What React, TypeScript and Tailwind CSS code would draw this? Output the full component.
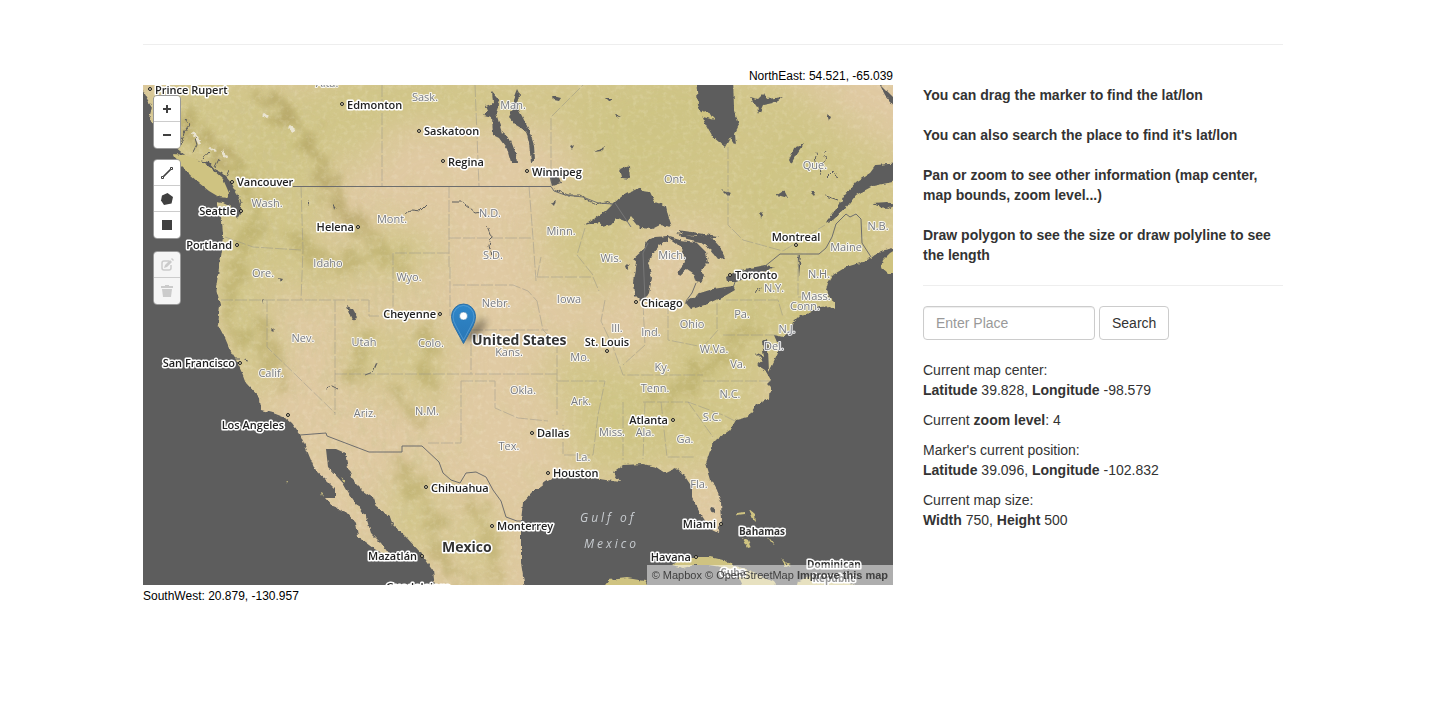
import React from "react";

type Anchor = "start" | "middle" | "end";
type City = { name: string; dot: [number, number]; x: number; y: number; anchor: Anchor };

const cities: City[] = [
  { name: "Prince Rupert", dot: [7, 4], x: 12, y: 9, anchor: "start" },
  { name: "Edmonton", dot: [199, 19], x: 204, y: 24, anchor: "start" },
  { name: "Saskatoon", dot: [276, 46], x: 281, y: 50, anchor: "start" },
  { name: "Regina", dot: [300, 76], x: 305, y: 81, anchor: "start" },
  { name: "Winnipeg", dot: [384, 86], x: 389, y: 91, anchor: "start" },
  { name: "Vancouver", dot: [89, 97], x: 94, y: 101, anchor: "start" },
  { name: "Seattle", dot: [98, 126], x: 93, y: 130, anchor: "end" },
  { name: "Portland", dot: [94, 160], x: 89, y: 164, anchor: "end" },
  { name: "Helena", dot: [215, 142], x: 211, y: 146, anchor: "end" },
  { name: "Cheyenne", dot: [297, 229], x: 293, y: 233, anchor: "end" },
  { name: "San Francisco", dot: [97, 278], x: 92, y: 282, anchor: "end" },
  { name: "Los Angeles", dot: [145, 330], x: 141, y: 344, anchor: "end" },
  { name: "Chicago", dot: [493, 217], x: 498, y: 222, anchor: "start" },
  { name: "St. Louis", dot: [464, 266], x: 464, y: 261, anchor: "middle" },
  { name: "Montreal", dot: [653, 160], x: 653, y: 156, anchor: "middle" },
  { name: "Toronto", dot: [587, 190], x: 592, y: 194, anchor: "start" },
  { name: "Atlanta", dot: [530, 335], x: 525, y: 339, anchor: "end" },
  { name: "Dallas", dot: [389, 348], x: 394, y: 352, anchor: "start" },
  { name: "Houston", dot: [405, 388], x: 410, y: 392, anchor: "start" },
  { name: "Chihuahua", dot: [283, 402], x: 288, y: 407, anchor: "start" },
  { name: "Monterrey", dot: [349, 441], x: 354, y: 445, anchor: "start" },
  { name: "Mazatlán", dot: [279, 471], x: 274, y: 475, anchor: "end" },
  { name: "Miami", dot: [578, 439], x: 573, y: 443, anchor: "end" },
  { name: "Havana", dot: [553, 472], x: 548, y: 476, anchor: "end" },
];

const regions: [string, number, number][] = [
  ["Alta.", 184, 2],
  ["Sask.", 282, 16],
  ["Man.", 370, 24],
  ["Ont.", 532, 98],
  ["Que.", 672, 84],
  ["N.B.", 735, 145],
  ["Maine", 703, 166],
  ["Wash.", 124, 122],
  ["Mont.", 249, 138],
  ["N.D.", 347, 132],
  ["Minn.", 418, 150],
  ["S.D.", 350, 174],
  ["Wis.", 468, 177],
  ["Mich.", 529, 174],
  ["Ore.", 120, 192],
  ["Idaho", 185, 182],
  ["Wyo.", 266, 196],
  ["Nebr.", 353, 222],
  ["Iowa", 426, 218],
  ["N.H.", 676, 193],
  ["N.Y.", 631, 207],
  ["Mass.", 673, 215],
  ["Conn.", 662, 225],
  ["Pa.", 599, 233],
  ["N.J.", 644, 248],
  ["Ohio", 549, 243],
  ["Ill.", 474, 247],
  ["Ind.", 508, 251],
  ["Nev.", 160, 257],
  ["Utah", 221, 261],
  ["Colo.", 288, 262],
  ["Kans.", 366, 271],
  ["Mo.", 437, 276],
  ["Del.", 631, 265],
  ["W.Va.", 571, 268],
  ["Va.", 595, 283],
  ["Ky.", 519, 286],
  ["Tenn.", 512, 307],
  ["N.C.", 587, 313],
  ["Calif.", 128, 292],
  ["Ariz.", 222, 332],
  ["N.M.", 284, 330],
  ["Okla.", 380, 309],
  ["Ark.", 438, 320],
  ["S.C.", 569, 336],
  ["Miss.", 469, 351],
  ["Ala.", 502, 351],
  ["Ga.", 542, 358],
  ["Tex.", 366, 365],
  ["La.", 440, 376],
  ["Fla.", 556, 403],
];

const waterPaths = [
  // Pacific and the Gulf of California
  "M-10,-10 L-2,2 L3,12 L9,22 L6,34 L20,46 L30,60 L37,66 L46,73 L55,75 L66,77 L72,84 L78,87 L84,93 L89,99 L94,108 L97,118 L99,127 L95,134 L92,126 L86,121 L80,118 L73,117 L76,126 L79,136 L80,150 L79,165 L77,178 L75,190 L73,203 L77,220 L75,240 L82,253 L88,267 L93,275 L100,290 L103,298 L117,313 L118,325 L130,328 L143,333 L149,338 L157,349 L163,363 L172,385 L184,396 L192,404 L192,413 L182,413 L190,422 L203,427 L213,438 L215,452 L230,463 L240,469 L246,469 L238,458 L228,448 L223,432 L214,420 L207,410 L200,398 L185,382 L183,364 L193,364 L202,368 L205,383 L212,398 L220,406 L230,413 L233,422 L247,432 L250,440 L263,452 L278,468 L290,485 L293,510 L-10,510 Z",
  // Gulf of Mexico and the Atlantic
  "M383,510 L378,478 L378,452 L378,435 L380,418 L390,407 L403,397 L410,393 L427,392 L450,393 L463,395 L477,397 L470,387 L480,380 L500,379 L513,382 L522,388 L533,383 L543,393 L549,402 L549,413 L557,428 L567,443 L575,447 L579,435 L578,418 L574,405 L568,395 L563,378 L570,357 L587,345 L593,335 L605,332 L613,320 L627,313 L628,303 L624,299 L628,295 L622,285 L614,280 L620,276 L612,268 L621,272 L619,257 L624,254 L625,264 L626,287 L631,277 L635,268 L636,262 L631,250 L640,252 L647,246 L650,237 L660,227 L677,222 L688,221 L692,224 L692,217 L687,213 L683,205 L685,198 L690,190 L703,182 L720,177 L728,173 L737,166 L747,164 L760,158 L760,510 Z",
  // Gulf of St. Lawrence
  "M760,78 L733,80 L727,88 L713,97 L702,110 L694,123 L682,138 L690,135 L703,123 L713,110 L730,101 L760,95 Z",
  // James Bay
  "M553,-8 L555,20 L562,38 L570,52 L582,62 L587,53 L593,62 L592,48 L596,40 L591,23 L590,-8 Z",
  // Great Lakes
  "M441,140 L452,133 L463,126 L472,117 L483,108 L495,103 L500,106 L507,107 L512,117 L523,121 L525,130 L529,142 L517,140 L509,144 L497,143 L488,132 L484,137 L474,133 L468,140 L460,142 L456,137 Z",
  "M492,210 L491,197 L494,177 L490,174 L500,165 L505,155 L512,152 L525,151 L525,156 L517,160 L510,168 L505,177 L509,193 L506,208 L500,218 Z",
  "M523,151 L537,155 L553,157 L563,167 L565,178 L558,185 L561,190 L558,198 L553,197 L550,188 L544,184 L537,190 L535,186 L542,177 L540,165 L533,158 Z",
  "M533,148 L553,152 L567,151 L577,162 L582,173 L575,174 L568,165 L557,157 L540,153 Z",
  "M542,217 L557,208 L570,204 L590,201 L592,205 L580,212 L565,219 L548,224 Z",
  "M583,192 L592,187 L602,184 L623,180 L632,182 L620,187 L593,197 L584,197 Z",
  // Manitoba lakes
  "M349,6 L354,12 L357,16 L353,28 L359,48 L368,56 L373,69 L374,78 L368,78 L364,64 L356,53 L350,50 L349,32 L341,30 L345,26 L343,21 L350,18 Z",
  "M374,4 L377,10 L373,20 L380,33 L386,45 L391,60 L392,76 L388,77 L386,58 L383,46 L373,40 L366,32 L370,24 L370,14 Z",
  // Smaller lakes
  "M410,11 L418,13 L416,16 L411,15 Z",
  "M463,13 L470,13 L466,16 Z",
  "M472,30 L478,31 L474,33 Z",
  "M427,62 L431,60 L429,65 Z",
  "M451,67 L461,62 L459,66 Z",
  "M477,84 L486,80 L487,94 L479,93 Z",
  "M406,90 L414,87 L418,98 L409,101 Z",
  "M408,118 L413,115 L411,121 Z",
  "M607,12 L615,14 L621,8 L624,14 L640,12 L630,18 L620,20 L616,29 L614,22 Z",
  "M646,75 L652,62 L661,58 L653,70 L648,79 Z",
  "M684,29 L688,32 L686,36 Z",
  "M736,-2 L744,6 L752,14 L752,22 L742,10 Z",
  "M730,118 L744,117 L752,120 L744,124 Z",
  "M578,104 L588,108 L585,111 Z",
  "M633,110 L641,105 L645,113 L638,111 Z",
  "M667,107 L673,107 L671,111 Z",
  "M617,125 L620,130 L618,134 Z",
  "M535,145 L575,151 L572,153 L540,150 Z",
  "M204,221 L210,224 L215,233 L209,235 L206,228 Z",
  "M136,193 L140,194 L138,197 Z",
  "M119,214 L121,216 L120,219 Z",
  "M128,243 L131,245 L129,247 Z",
  "M568,422 L572,423 L571,428 L567,426 Z",
  "M483,181 L486,178 L485,186 Z",
  "M655,171 L658,170 L656,192 Z",
  "M165,115 L167,118 L165,121 Z",
  "M190,118 L193,121 L191,125 Z",
];

const islandPaths = [
  "M30,69 L43,70 L58,76 L68,83 L80,94 L86,108 L84,113 L76,112 L66,106 L56,98 L45,88 L34,77 Z",
  "M556,28 L562,26 L568,29 L572,35 L560,32 Z",
  "M648,228 L658,226 L669,226 L662,230 L650,232 Z",
  "M760,160 L747,168 L740,175 L738,182 L745,188 L760,188 Z",
  "M529,480 L536,475 L547,472 L567,472 L580,475 L590,480 L602,484 L615,490 L630,497 L634,503 L600,503 L594,490 L578,482 L565,480 L552,480 L540,483 Z",
  "M459,504 L466,495 L484,493 L502,496 L506,504 Z",
  "M653,504 L655,496 L668,491 L700,492 L716,504 Z",
  "M593,428 L602,427 L602,429 L594,430 Z",
  "M606,424 L612,429 L613,437 L610,434 Z",
  "M599,452 L605,455 L608,462 L605,463 Z",
  "M624,451 L628,455 L632,461 L628,457 Z",
  "M638,473 L644,479 L648,480 L643,482 Z",
  "M178,407 L180,408 L179,411 Z",
  "M143,395 L145,397 L144,399 Z",
  "M198,392 L202,395 L202,398 Z",
];

const greenAreas: [number, number, number, number][] = [
  [80, 40, 85, 60], [130, 110, 60, 70], [95, 190, 34, 75], [570, 60, 130, 80], [680, 110, 90, 70],
  [660, 190, 90, 60], [600, 250, 80, 50], [540, 330, 90, 60], [470, 350, 50, 50], [450, 150, 50, 60],
  [500, 30, 90, 60], [330, 12, 120, 30], [200, 30, 50, 50], [110, 270, 24, 50], [440, 290, 40, 30],
  [250, 170, 45, 30], [280, 280, 24, 50], [270, 430, 26, 50], [335, 460, 22, 45], [260, 5, 50, 20],
  [175, 190, 40, 25], [225, 270, 26, 40],
];

const ridges = [
  "M108,0 C135,25 165,45 180,85 S205,130 222,145 S250,170 262,192",
  "M25,20 C45,40 60,60 95,90 S105,150 92,190 S88,240 98,262",
  "M120,235 C125,265 135,290 142,305",
  "M280,240 C298,265 270,285 290,305",
  "M252,365 C265,395 288,420 292,450 S310,480 320,500",
  "M322,405 C345,440 350,470 358,500",
  "M510,325 C550,300 585,270 610,232",
  "M150,150 C185,195 220,180 240,160",
  "M215,245 C222,262 212,285 205,300",
  "M248,305 C262,325 270,330 282,335",
];

function MapCanvas() {
  return (
    <svg
      viewBox="0 0 750 500"
      className="block h-auto w-full font-['Open_Sans','Noto_Sans',sans-serif]"
      role="img"
      aria-label="Map of North America"
    >
      <defs>
        <filter id="coast" x="-5%" y="-5%" width="110%" height="110%">
          <feTurbulence type="fractalNoise" baseFrequency="0.2" numOctaves="2" seed="4" result="n" />
          <feDisplacementMap in="SourceGraphic" in2="n" scale="4" xChannelSelector="R" yChannelSelector="G" />
        </filter>
        <filter id="soft" x="-50%" y="-50%" width="200%" height="200%">
          <feGaussianBlur stdDeviation="18" />
        </filter>
        <filter id="rough" x="-20%" y="-20%" width="140%" height="140%">
          <feTurbulence type="fractalNoise" baseFrequency="0.07" numOctaves="4" seed="9" result="n" />
          <feDisplacementMap in="SourceGraphic" in2="n" scale="42" xChannelSelector="R" yChannelSelector="G" result="d" />
          <feGaussianBlur in="d" stdDeviation="3" />
        </filter>
        <filter id="relief" x="0" y="0" width="100%" height="100%">
          <feTurbulence type="fractalNoise" baseFrequency="0.045" numOctaves="5" seed="12" />
          <feColorMatrix values="0 0 0 0 0.66  0 0 0 0 0.6  0 0 0 0 0.3  2.4 0 0 0 -1.1" />
        </filter>
        <filter id="ranges" x="-5%" y="-5%" width="110%" height="110%">
          <feTurbulence type="fractalNoise" baseFrequency="0.16 0.06" numOctaves="3" seed="21" result="n" />
          <feColorMatrix in="n" values="0 0 0 0 0.62  0 0 0 0 0.55  0 0 0 0 0.3  4 0 0 0 -1.9" result="c" />
          <feGaussianBlur in="SourceAlpha" stdDeviation="14" result="m" />
          <feComposite in="c" in2="m" operator="in" />
        </filter>
        <filter id="grain" x="0" y="0" width="100%" height="100%">
          <feTurbulence type="fractalNoise" baseFrequency="0.2" numOctaves="3" seed="3" />
          <feColorMatrix values="0 0 0 0 1  0 0 0 0 0.95  0 0 0 0 0.8  0 2 0 0 -0.95" />
        </filter>
        <filter id="shade" x="-50%" y="-50%" width="200%" height="200%">
          <feGaussianBlur stdDeviation="3" />
        </filter>
        <linearGradient id="pin" x1="0" y1="0" x2="0" y2="1">
          <stop offset="0" stopColor="#2e87c9" />
          <stop offset="1" stopColor="#2a76b5" />
        </linearGradient>
        <linearGradient id="cast" x1="320" y1="258" x2="346" y2="236" gradientUnits="userSpaceOnUse">
          <stop offset="0" stopColor="#000" stopOpacity="0.7" />
          <stop offset="1" stopColor="#000" stopOpacity="0.15" />
        </linearGradient>
      </defs>

      <rect width="750" height="500" fill="#e0caa3" />
      <g filter="url(#soft)" fill="#cdc483">
        {greenAreas.map(([cx, cy, rx, ry], i) => (
          <ellipse key={i} cx={cx} cy={cy} rx={rx} ry={ry} opacity="0.8" />
        ))}
      </g>
      <rect width="750" height="500" filter="url(#relief)" opacity="0.28" />
      <path
        d="M20,0 H150 L230,120 L300,190 L290,340 L340,500 H250 L160,330 L90,250 L85,120 Z"
        filter="url(#ranges)"
        opacity="0.32"
      />
      <g filter="url(#rough)" fill="none" stroke="#a79b50" strokeWidth="13" opacity="0.36">
        {ridges.map((d) => (
          <path key={d} d={d} />
        ))}
      </g>
      <g filter="url(#rough)" fill="none" stroke="#a8925c" strokeWidth="7" opacity="0.32">
        <path d="M112,6 C140,25 165,45 180,85 S205,120 215,140" />
        <path d="M30,35 C55,50 70,60 95,85" />
      </g>
      <g filter="url(#coast)" fill="none" stroke="#f0ece4" strokeWidth="3" opacity="0.8">
        <path d="M50,47 l3,5 l4,7 M66,62 l6,4 M79,66 l4,7 M120,29 l4,3 M146,42 l5,4" />
      </g>
      <rect width="750" height="500" filter="url(#grain)" opacity="0.22" />

      <g fill="#5d5d5d" filter="url(#coast)">
        {waterPaths.map((d) => (
          <path key={d} d={d} />
        ))}
      </g>
      <g filter="url(#coast)" fill="none" stroke="#5d5d5d" strokeWidth="1">
        <path d="M38,60 l3,-12 l6,-8 l-5,-6 M50,68 l4,-8 l-2,-7 M60,74 l6,-7 M72,82 l4,-8 M84,92 l3,-7 M94,110 l4,6 l-2,7" />
        <path d="M261,129 l8,-4 l8,1 l6,-6 M309,117 l10,0 l8,6 l6,5 l7,-1 M344,141 l4,10 l-2,10 l3,10 M411,104 l14,6 l12,0 l14,9 l12,-2 l8,3" />
        <path d="M673,71 a5,6 0 1 0 9,0 M675,70 l-2,-4 M681,69 l2,-3 M677,84 l1,5 M684,92 l6,-6 l5,7 M683,111 l12,4 M222,290 l8,-3 l4,-9 M183,303 l6,-2 l6,3" />
        <path d="M14,8 l-3,8 M18,14 l-4,7 M89,274 l8,0 M100,275 l5,1 M612,208 l3,-5 M616,206 l2,-4" />
      </g>
      <g fill="#cfc381" filter="url(#coast)">
        {islandPaths.map((d) => (
          <path key={d} d={d} />
        ))}
      </g>

      <g fill="none" stroke="#8c8c88" strokeWidth="1" strokeDasharray="12 2" opacity="0.42">
        <path d="M239,0 V101 M332,0 L336,101 M408,101 V32 L440,0 M306,101 V182 M306,153 H390 M306,168 H250 M386,101 L390,153 L393,196 M585,62 V140 L600,155 L640,166 L682,140" />
        <path d="M158,101 L160,165 L158,215 M78,215 H226 M124,215 V262 L192,328 M192,215 V330 M226,215 V231 H297 M250,168 V231 M192,289 H414 M158,165 L110,162 L82,152" />
        <path d="M310,200 H370 L385,206 L394,216 M394,192 H450 L456,206 M394,216 L400,245 L405,250 M307,182 V231 M328,245 H405 M328,245 V289 M414,256 V330 M318,296 H352 V323 L375,333 L405,336 M318,296 V358 H285" />
        <path d="M414,296 H462 L455,330 L450,370 H420 V340 M462,215 L458,236 L470,262 L480,290 H560 M500,218 L502,260 L480,280 M525,217 V255 L560,262 L575,245 M574,218 V246 M580,250 H634 M560,296 H628 M500,317 H545 L580,330 L592,336 M545,317 L570,352 M518,317 L524,372 H552 M480,317 V375 M502,317 L500,374 M583,215 H635 L640,232 M655,170 V212 H684 M394,192 L398,172 M442,143 L434,170 L450,190" />
      </g>
      <g fill="none" stroke="#6d6d6d" strokeWidth="1">
        <path d="M150,101.500 H408 L411,106 L422,110 L440,112 L455,118 L470,119" />
        <path d="M157,350 L183,348 L184,351 L226,367 H259 V361 H279 L296,377 L300,388 L308,395 L317,398 L323,388 L333,387 L343,392 L350,405 L358,416 L363,432 L374,436 L380,436" />
        <path d="M592,197 L590,203 M553,198 L549,208 L543,216 M621,182 L637,169 H676 L683,163 L689,152 L693,139 L703,129 L707,132 L713,129 L718,134 L719,158 L728,172" />
      </g>
      <path d="M472,118 L488,142 M505,158 L500,168 L502,215" fill="none" stroke="#777" strokeWidth="1" />

      <g fill="#d9d0b0" stroke="#1d1d1d" strokeWidth="1">
        {cities.map((c) => (
          <circle key={c.name} cx={c.dot[0]} cy={c.dot[1]} r="1.500" />
        ))}
      </g>

      <g
        className="text-[11px]"
        fill="#777a80"
        stroke="#ffffff"
        strokeOpacity="0.85"
        strokeWidth="2"
        strokeLinejoin="round"
        paintOrder="stroke"
        textAnchor="middle"
      >
        {regions.map(([name, x, y]) => (
          <text key={name} x={x} y={y}>
            {name}
          </text>
        ))}
      </g>
      <g
        className="text-[11px] font-semibold"
        fill="#222222"
        stroke="#ffffff"
        strokeWidth="3"
        strokeLinejoin="round"
        paintOrder="stroke"
      >
        {cities.map((c) => (
          <text key={c.name} x={c.x} y={c.y} textAnchor={c.anchor}>
            {c.name}
          </text>
        ))}
        <text x="243" y="506">Guadalajara</text>
        <g className="text-[10px] font-bold" textAnchor="middle" fill="#333">
          <text x="619" y="450">Bahamas</text>
          <text x="590" y="491">Cuba</text>
          <text x="691" y="483">Dominican</text>
          <text x="691" y="497">Republic</text>
        </g>
        <g className="text-[14px] font-bold" fill="#333">
          <text x="329" y="260">United States</text>
          <text x="299" y="467">Mexico</text>
        </g>
      </g>
      <g className="text-[12px] tracking-[3px] italic" fill="#c8ccd0">
        <text x="437" y="437">Gulf of</text>
        <text x="441" y="463">Mexico</text>
      </g>

      <path d="M320,258 L329,243 Q336,231 343,233 Q348,238 340,246 Z" fill="url(#cast)" filter="url(#shade)" />
      <path
        d="M320.500,258.500 L311,241 Q308.500,236 308.500,231.500 A12,12.500 0 0 1 332.500,231.500 Q332.500,236 330,241 Z"
        fill="url(#pin)"
        stroke="#2b6ea5"
        strokeWidth="1"
        strokeLinejoin="round"
      />
      <path
        d="M310,232 A10.500,11.500 0 0 1 331,232 Q331,236 328,241 L320.500,255 L313,241 Q310,236 310,232 Z"
        fill="none"
        stroke="#6fb0df"
        strokeWidth="1"
        opacity="0.5"
      />
      <circle cx="320.500" cy="231" r="4" fill="#fff" stroke="#2b6ea5" strokeWidth="0.500" />
    </svg>
  );
}

function Tool({ label, disabled, children }: { label: string; disabled?: boolean; children: React.ReactNode }) {
  return (
    <button
      type="button"
      aria-label={label}
      disabled={disabled}
      className="flex size-[26px] items-center justify-center border-b border-[#cccccc] bg-white text-[#404040] last:border-b-0 disabled:bg-[#f5f5f5] disabled:text-[#cbcbcb]"
    >
      <svg viewBox="0 0 26 26" className="size-[26px] shrink-0" fill="currentColor" aria-hidden="true">
        {children}
      </svg>
    </button>
  );
}

function ToolGroup({ children }: { children: React.ReactNode }) {
  return (
    <div className="flex flex-col overflow-hidden rounded-[4px] border border-[#999999]">
      {children}
    </div>
  );
}

function MapControls() {
  return (
    <div className="absolute top-[10px] left-[10px] flex flex-col gap-[10px]">
      <ToolGroup>
        <Tool label="Zoom in">
          <path d="M12 9h2v3h3v2h-3v3h-2v-3H9v-2h3z" />
        </Tool>
        <Tool label="Zoom out">
          <path d="M9 12h8v2H9z" />
        </Tool>
      </ToolGroup>
      <div className="flex flex-col gap-3">
        <ToolGroup>
          <Tool label="Draw a polyline">
            <path d="M7.500 16.500h2v2h-2z M16.500 7.500h2v2h-2z" fill="none" stroke="currentColor" />
            <path d="M9.500 16.500l7-7" stroke="currentColor" strokeWidth="1.700" />
          </Tool>
          <Tool label="Draw a polygon">
            <path d="M13.500 7l5.500 4-1.500 6.500-7.500 1.500-3-4.500 1-5z" />
          </Tool>
          <Tool label="Draw a rectangle">
            <path d="M8 8h10v10H8z" />
          </Tool>
        </ToolGroup>
        <ToolGroup>
          <Tool label="Edit layers" disabled>
            <path d="M15 9h-5q-2 0-2 2v5q0 2 2 2h5q2 0 2-2v-3" fill="none" stroke="currentColor" strokeWidth="1.500" />
            <path d="M11 13l5-5 2 2-5 5-3 1z M17 7l1-1 2 2-1 1z" />
          </Tool>
          <Tool label="Delete layers" disabled>
            <path d="M11 7h4v1h4v2H7V8h4z M8 11h10l-1 8H9z" />
          </Tool>
        </ToolGroup>
      </div>
    </div>
  );
}

export default function App() {
  return (
    <main className="min-h-screen bg-white pt-11 pr-[5px] pb-5 font-['Liberation_Sans',Arial,sans-serif] text-sm leading-5 text-[#333333]">
      <div className="mx-auto max-w-[1140px]">
        <hr className="border-t border-[#eeeeee]" />
        <div className="mt-[22px] flex flex-wrap gap-x-[30px] gap-y-6">
          <section className="w-[750px] max-w-full">
            <p className="text-right text-xs leading-[18px] text-black">NorthEast: 54.521, -65.039</p>
            <div className="relative overflow-hidden">
              <MapCanvas />
              <MapControls />
              <div className="absolute right-0 bottom-0 bg-white/50 px-[5px] text-[11px] leading-5 text-[#404040]">
                <a href="#mapbox">© Mapbox</a> <a href="#osm">© OpenStreetMap</a>{" "}
                <a href="#improve" className="font-bold">
                  Improve this map
                </a>
              </div>
            </div>
            <p className="mt-px text-xs leading-5 text-black">SouthWest: 20.879, -130.957</p>
          </section>

          <aside className="min-w-[300px] flex-1 pt-[18px]">
            <div className="flex flex-col gap-5 font-bold">
              <p>You can drag the marker to find the lat/lon</p>
              <p>You can also search the place to find it's lat/lon</p>
              <p>Pan or zoom to see other information (map center, map bounds, zoom level...)</p>
              <p>Draw polygon to see the size or draw polyline to see the length</p>
            </div>
            <hr className="my-5 border-t border-[#eeeeee]" />
            <form className="mb-5 flex gap-1" onSubmit={(e) => e.preventDefault()}>
              <input
                type="text"
                aria-label="Enter Place"
                placeholder="Enter Place"
                className="h-[34px] w-[172px] rounded-sm border border-[#cccccc] bg-white px-3 shadow-[inset_0_1px_1px_rgba(0,0,0,0.075)] placeholder:text-[#999999]"
              />
              <button type="submit" className="h-[34px] rounded-sm border border-[#cccccc] bg-white px-3">
                Search
              </button>
            </form>
            <div className="flex flex-col gap-[10px]">
              <p>
                Current map center:
                <br />
                <b>Latitude</b> 39.828, <b>Longitude</b> -98.579
              </p>
              <p>
                Current <b>zoom level</b>: 4
              </p>
              <p>
                Marker's current position:
                <br />
                <b>Latitude</b> 39.096, <b>Longitude</b> -102.832
              </p>
              <p>
                Current map size:
                <br />
                <b>Width</b> 750, <b>Height</b> 500
              </p>
            </div>
          </aside>
        </div>
      </div>
    </main>
  );
}
